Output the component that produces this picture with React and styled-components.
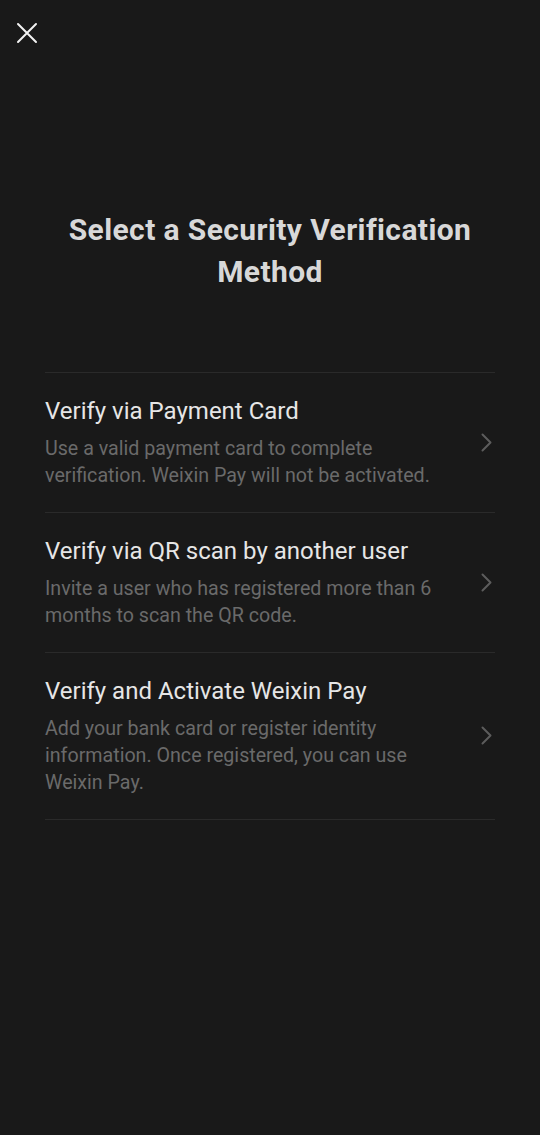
import React from "react";
import styled, { createGlobalStyle } from "styled-components";

const Global = createGlobalStyle`
  html, body { margin: 0; padding: 0; background: #191919; }
  body { font-family: Roboto, "Noto Sans", sans-serif; -webkit-font-smoothing: antialiased; }
`;

const Page = styled.div`
  width: 540px;
  min-height: 1135px;
  background: #191919;
  display: flex;
  flex-direction: column;
`;

const TopBar = styled.div`
  height: 66px;
  display: flex;
  align-items: center;
  padding-left: 15px;
`;

const CloseButton = styled.button`
  width: 24px;
  height: 24px;
  padding: 0;
  border: none;
  background: none;
  display: flex;
  align-items: center;
  justify-content: center;
  cursor: pointer;
`;

const Title = styled.h1`
  margin: 143px 0 0;
  padding: 0 40px;
  text-align: center;
  font-size: 30px;
  line-height: 42px;
  font-weight: 700;
  letter-spacing: 0.4px;
  color: #d8d8d8;
`;

const List = styled.div`
  margin: 79px 45px 0;
  border-top: 1px solid #2a2a2a;
  display: flex;
  flex-direction: column;
`;

const Row = styled.div`
  display: flex;
  align-items: center;
  padding: 22px 0 23px;
  border-bottom: 1px solid #2a2a2a;
  cursor: pointer;
`;

const Texts = styled.div`
  flex: 1;
  display: flex;
  flex-direction: column;
  gap: 8px;
  max-width: 410px;
`;

const RowTitle = styled.div`
  font-size: 24px;
  line-height: 32px;
  color: #e6e6e6;
`;

const RowDesc = styled.div`
  font-size: 19.65px;
  line-height: 27px;
  color: #6a6a6a;
`;

const Chevron = styled.div`
  margin-left: auto;
  margin-right: 3px;
  width: 16px;
  display: flex;
  justify-content: flex-end;
`;

const items = [
  {
    title: "Verify via Payment Card",
    desc: "Use a valid payment card to complete verification. Weixin Pay will not be activated.",
  },
  {
    title: "Verify via QR scan by another user",
    desc: "Invite a user who has registered more than 6 months to scan the QR code.",
  },
  {
    title: "Verify and Activate Weixin Pay",
    desc: "Add your bank card or register identity information. Once registered, you can use Weixin Pay.",
  },
];

export default function App() {
  return (
    <Page>
      <Global />
      <TopBar>
        <CloseButton aria-label="Close">
          <svg width="22" height="22" viewBox="0 0 22 22">
            <path d="M2 2 L20 20 M20 2 L2 20" stroke="#f2f2f2" strokeWidth="2" strokeLinecap="round" />
          </svg>
        </CloseButton>
      </TopBar>
      <Title>Select a Security Verification Method</Title>
      <List>
        {items.map((it) => (
          <Row key={it.title}>
            <Texts>
              <RowTitle>{it.title}</RowTitle>
              <RowDesc>{it.desc}</RowDesc>
            </Texts>
            <Chevron>
              <svg width="11" height="19" viewBox="0 0 11 19">
                <path d="M1.5 1.5 L9.5 9.5 L1.5 17.5" stroke="#5c5c5c" strokeWidth="2" fill="none" strokeLinecap="round" strokeLinejoin="round" />
              </svg>
            </Chevron>
          </Row>
        ))}
      </List>
    </Page>
  );
}
